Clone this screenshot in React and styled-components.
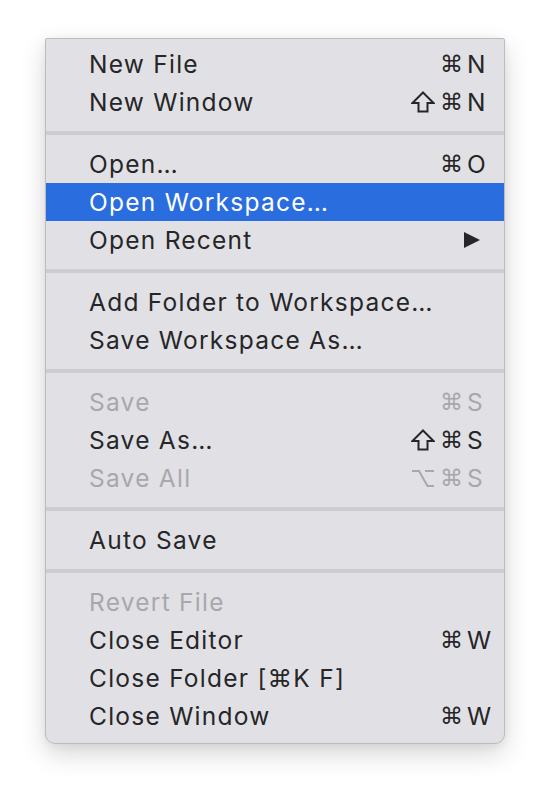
import React from 'react';
import styled, {createGlobalStyle} from 'styled-components';

const GlobalStyle = createGlobalStyle`
  html, body {
    margin: 0;
    padding: 0;
    background: #ffffff;
  }
  body {
    font-family: Inter, "Noto Sans", "DejaVu Sans", sans-serif;
    -webkit-font-smoothing: antialiased;
  }
`

const Page = styled('div')`
  padding: 38px 0 0 45px;
  height: 798px;
  box-sizing: border-box;
`

const Menu = styled('div')`
  width: 460px;
  box-sizing: border-box;
  padding: 6px 0 8px;
  background: #e1e1e5;
  border: 1px solid #bcbcbf;
  border-radius: 2px 2px 10px 10px;
  box-shadow: 0 10px 26px rgba(0, 0, 0, 0.16), 0 2px 8px rgba(0, 0, 0, 0.06);
  display: flex;
  flex-direction: column;
`

const Row = styled('div')`
  height: 38px;
  display: flex;
  align-items: center;
  padding: 0 10px 0 43px;
  font-size: 24.5px;
  letter-spacing: 1.25px;
  color: ${p => p.$active ? '#ffffff' : p.$disabled ? '#a8a8ab' : '#262628'};
  background: ${p => p.$active ? '#2a6ddf' : 'transparent'};
`

const Label = styled('span')`
  flex: 1;
  white-space: nowrap;
`

const Mods = styled('span')`
  display: flex;
  align-items: center;
  gap: 5px;
`

const Cmd = styled('span')`
  font-family: "DejaVu Sans", sans-serif;
  font-size: 23px;
  letter-spacing: 0;
  line-height: 1;
`

const ModIcon = styled('svg')`
  width: 24px;
  height: 22px;
  fill: none;
  stroke: currentColor;
  stroke-width: 2;
  stroke-linejoin: miter;
`

const Key = styled('span')`
  width: 27px;
  padding-left: 4px;
  letter-spacing: 0;
`

const Arrow = styled('svg')`
  width: 18px;
  height: 18px;
  margin-right: 13px;
  fill: currentColor;
`

const Separator = styled('div')`
  height: 4px;
  margin: 10px 0;
  background: #cdcdd1;
`

const Shift = () => (
  <ModIcon viewBox="0 0 24 22">
    <path d="M12 1.5 L22.5 12 H16.5 V20.5 H7.5 V12 H1.5 Z" />
  </ModIcon>
)

const Option = () => (
  <ModIcon viewBox="0 0 24 22">
    <path d="M1 4 H8 L16.5 19 H23 M14 4 H23" />
  </ModIcon>
)

const groups = [
  [
    {label: 'New File', mods: [], key: 'N'},
    {label: 'New Window', mods: ['shift'], key: 'N'},
  ],
  [
    {label: 'Open…', mods: [], key: 'O'},
    {label: 'Open Workspace…', active: true},
    {label: 'Open Recent', submenu: true},
  ],
  [
    {label: 'Add Folder to Workspace…'},
    {label: 'Save Workspace As…'},
  ],
  [
    {label: 'Save', mods: [], key: 'S', disabled: true},
    {label: 'Save As…', mods: ['shift'], key: 'S'},
    {label: 'Save All', mods: ['option'], key: 'S', disabled: true},
  ],
  [
    {label: 'Auto Save'},
  ],
  [
    {label: 'Revert File', disabled: true},
    {label: 'Close Editor', mods: [], key: 'W'},
    {label: 'Close Folder [⌘K F]'},
    {label: 'Close Window', mods: [], key: 'W'},
  ],
]

const MenuItem = ({item}) => (
  <Row $active={item.active} $disabled={item.disabled}>
    <Label>{item.label}</Label>
    {item.key && (
      <Mods>
        {item.mods.includes('shift') && <Shift />}
        {item.mods.includes('option') && <Option />}
        <Cmd>⌘</Cmd>
      </Mods>
    )}
    {item.key && <Key>{item.key}</Key>}
    {item.submenu && (
      <Arrow viewBox="0 0 18 18">
        <polygon points="1,1 17,9 1,17" />
      </Arrow>
    )}
  </Row>
)

export default function App() {
  return (
    <Page>
      <GlobalStyle />
      <Menu>
        {groups.map((group, i) => (
          <React.Fragment key={i}>
            {i > 0 && <Separator />}
            {group.map(item => <MenuItem key={item.label} item={item} />)}
          </React.Fragment>
        ))}
      </Menu>
    </Page>
  );
}
